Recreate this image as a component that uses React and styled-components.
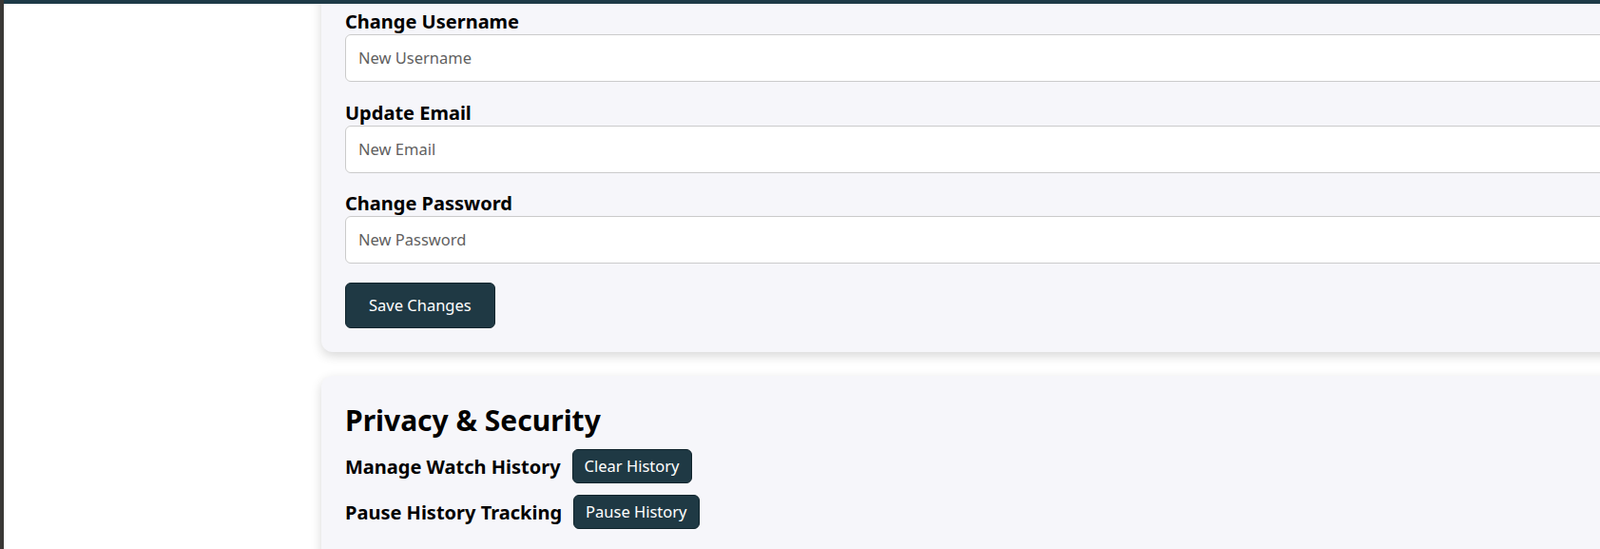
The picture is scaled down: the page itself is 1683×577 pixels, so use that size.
import React from 'react';
import styled, { createGlobalStyle } from 'styled-components';

const GlobalStyle = createGlobalStyle`
  html, body {
    margin: 0;
    padding: 0;
    background: #ffffff;
    overflow: hidden;
  }
  body {
    font-family: 'Noto Sans', 'Open Sans', sans-serif;
    color: #000;
  }
`;

const Frame = styled.div`
  display: flex;
  height: 100vh;
  border-left: 4px solid #3a3836;
`;

const Column = styled.div`
  flex: 1;
  display: flex;
  flex-direction: column;
  min-width: 0;
`;

const TopBar = styled.div`
  position: relative;
  z-index: 2;
  height: 4px;
  flex-shrink: 0;
  background: #1e3a47;
`;

const Body = styled.div`
  display: flex;
  flex: 1;
  overflow: hidden;
`;

const Sidebar = styled.aside`
  width: 310px;
  flex-shrink: 0;
  background: #ffffff;
`;

const Main = styled.main`
  padding: 0 24px;
`;

const Card = styled.section`
  width: 1500px;
  box-sizing: border-box;
  margin-top: ${(props) => props.offset || 0}px;
  margin-bottom: 25px;
  padding: 25px;
  background: #f6f6fa;
  border-radius: 12px;
  box-shadow: 0 4px 12px rgba(0, 0, 0, 0.16);
`;

const Field = styled.div`
  margin-bottom: 19.5px;
`;

const Label = styled.label`
  display: block;
  font-size: 20px;
  line-height: 26px;
  font-weight: 700;
`;

const Input = styled.input`
  display: block;
  width: 100%;
  box-sizing: border-box;
  padding: 13px 13px;
  font-family: 'Noto Sans', sans-serif;
  font-size: 16.5px;
  line-height: 22px;
  background: #fff;
  border: 1px solid #cbcbcb;
  border-radius: 6px;
  outline: none;

  &::placeholder {
    color: #5f5f5f;
  }
`;

const Button = styled.button`
  display: inline-block;
  padding: ${(props) => (props.small ? '6px 12px' : '12px 24px')};
  font-family: 'Noto Sans', sans-serif;
  font-size: 16.5px;
  line-height: 22px;
  color: #fff;
  background: #1f3944;
  border: 1px solid #10242c;
  border-radius: 6px;
  cursor: pointer;
  white-space: nowrap;
`;

const Heading = styled.h2`
  margin: 0 0 9.5px;
  font-size: 30px;
  font-weight: 700;
  line-height: 43px;
`;

const Row = styled.div`
  display: flex;
  align-items: center;
  gap: 12px;
  margin-bottom: 12px;
`;

const RowLabel = styled.span`
  font-size: 20px;
  font-weight: 700;
`;

const fields = [
  { label: 'Change Username', placeholder: 'New Username', type: 'text' },
  { label: 'Update Email', placeholder: 'New Email', type: 'email' },
  { label: 'Change Password', placeholder: 'New Password', type: 'password' },
];

const privacyRows = [
  { label: 'Manage Watch History', action: 'Clear History' },
  { label: 'Pause History Tracking', action: 'Pause History' },
];

const App = () => (
  <>
    <GlobalStyle />
    <Frame>
      <Column>
        <TopBar />
        <Body>
          <Sidebar />
          <Main>
            <Card offset={-19}>
              {fields.map((f) => (
                <Field key={f.label}>
                  <Label>{f.label}</Label>
                  <Input type={f.type} placeholder={f.placeholder} />
                </Field>
              ))}
              <Button>Save Changes</Button>
            </Card>
            <Card>
              <Heading>Privacy &amp; Security</Heading>
              {privacyRows.map((r) => (
                <Row key={r.label}>
                  <RowLabel>{r.label}</RowLabel>
                  <Button small>{r.action}</Button>
                </Row>
              ))}
            </Card>
          </Main>
        </Body>
      </Column>
    </Frame>
  </>
);

export default App;
